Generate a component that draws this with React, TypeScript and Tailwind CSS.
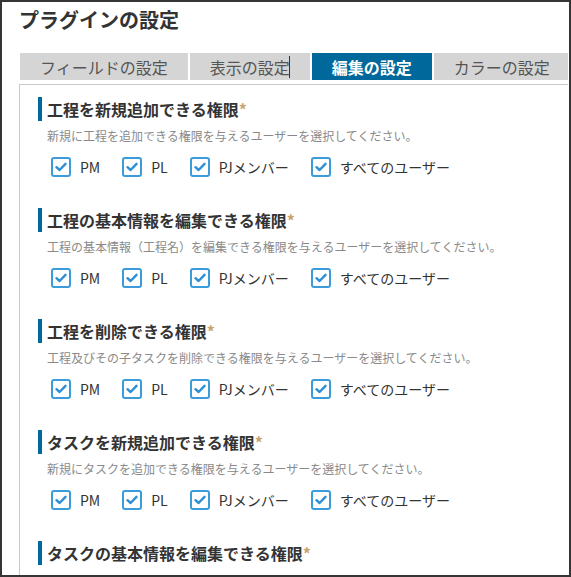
import React from 'react'

const font = { fontFamily: '"Noto Sans CJK JP", "Noto Sans", sans-serif' }

const sections = [
    { title: '工程を新規追加できる権限', desc: '新規に工程を追加できる権限を与えるユーザーを選択してください。' },
    { title: '工程の基本情報を編集できる権限', desc: '工程の基本情報（工程名）を編集できる権限を与えるユーザーを選択してください。' },
    { title: '工程を削除できる権限', desc: '工程及びその子タスクを削除できる権限を与えるユーザーを選択してください。' },
    { title: 'タスクを新規追加できる権限', desc: '新規にタスクを追加できる権限を与えるユーザーを選択してください。' },
    { title: 'タスクの基本情報を編集できる権限', desc: '' },
]

const roles = ['PM', 'PL', 'PJメンバー', 'すべてのユーザー']

const CheckBox = () => (
    <span className="w-[20px] h-[20px] border-2 border-[#3b9bdb] rounded-[3px] bg-white flex items-center justify-center shrink-0">
        <svg width="12" height="10" viewBox="0 0 12 10" fill="none">
            <path d="M1.5 5.2 L4.6 8 L10.5 1.8" stroke="#2d8fd5" strokeWidth="2.4" strokeLinecap="round" strokeLinejoin="round" />
        </svg>
    </span>
)

const Section = ({ title, desc }: { title: string; desc: string }) => (
    <div className="mb-[31px]">
        <h3 className="border-l-4 border-[#00689b] pl-[5px] h-[24px] flex items-center text-[16px] leading-[24px] font-bold text-[#333]">
            {title}<span className="text-[#c9a36a]">*</span>
        </h3>
        {desc && (
            <>
                <p className="pl-[9px] mt-[6px] text-[12px] leading-[18px] text-[#8a8a8a]">{desc}</p>
                <div className="pl-[13px] mt-[12px] flex items-center gap-[22px]">
                    {roles.map((r) => (
                        <label key={r} className="flex items-center gap-[9px]">
                            <CheckBox />
                            <span className="text-[14px] leading-[20px] text-[#333]">{r}</span>
                        </label>
                    ))}
                </div>
            </>
        )}
    </div>
)

const App = () => {
    return (
        <div style={font} className="w-[571px] h-[577px] border-2 border-[#353535] bg-white overflow-hidden">
            <div className="pl-[17px] pr-[1px]">
                <h1 className="pt-[4px] text-[20px] leading-[28px] font-bold text-[#333]">プラグインの設定</h1>
                <div className="mt-[19px] ml-px flex gap-[2px] h-[27px] overflow-hidden">
                    <div className="px-5 bg-[#d5d5d5] text-[#555] text-[16px] flex items-center shrink-0">フィールドの設定</div>
                    <div className="px-5 bg-[#d5d5d5] text-[#555] text-[16px] flex items-center shrink-0">
                        表示の設定<span className="w-px h-[22px] bg-[#333] ml-[-1px]" />
                    </div>
                    <div className="px-5 bg-[#00689b] text-white font-bold text-[16px] flex items-center shrink-0">編集の設定</div>
                    <div className="px-5 bg-[#d5d5d5] text-[#555] text-[16px] flex items-center shrink-0">カラーの設定</div>
                </div>
                <div className="mt-[4px] border-t border-l border-[#c8c8c8] pt-[12px] pl-[18px] h-[500px]">
                    {sections.map((s) => (
                        <Section key={s.title} title={s.title} desc={s.desc} />
                    ))}
                </div>
            </div>
        </div>
    )
}

export default App
